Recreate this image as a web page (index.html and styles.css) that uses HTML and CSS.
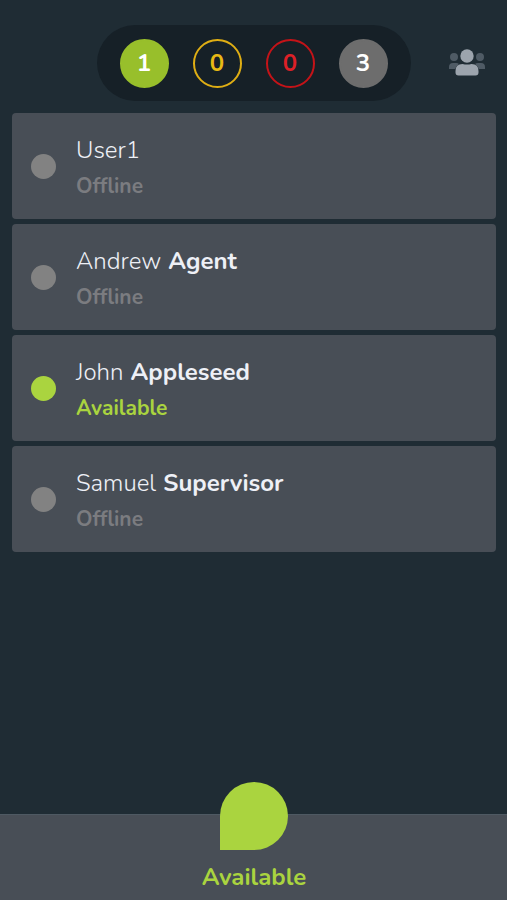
FILE: index.html
```html
<!DOCTYPE html>
<html lang="en">
<head>
<meta charset="utf-8">
<meta name="viewport" content="width=device-width, initial-scale=1">
<title>Team status</title>
<link rel="stylesheet" href="styles.css">
</head>
<body>
<header class="top">
  <div class="counts">
    <span class="count count-available">1</span>
    <span class="count count-away">0</span>
    <span class="count count-busy">0</span>
    <span class="count count-offline">3</span>
  </div>
  <button class="team" type="button" aria-label="Team">
    <svg viewBox="0 0 38 28" width="38" height="28" aria-hidden="true">
      <g fill="#4f5b65">
        <circle cx="6" cy="8" r="4"/>
        <circle cx="32" cy="8" r="4"/>
        <path d="M1 20v-2q0-4 4-4h3q2 0 3 1-3 2-4 5zM37 20v-2q0-4-4-4h-3q-2 0-3 1 3 2 4 5z"/>
      </g>
      <g fill="#9ca4ad">
        <circle cx="19" cy="7" r="6.700"/>
        <path d="M7.500 23.500v-1.500q0-7 7-7 4.500 1 9 0 7 0 7 7v1.500q0 3-3 3H10.500q-3 0-3-3z"/>
      </g>
    </svg>
  </button>
</header>
<main>
  <ul class="users">
    <li class="user">
      <span class="dot"></span>
      <div><p class="name">User1</p><p class="state">Offline</p></div>
    </li>
    <li class="user">
      <span class="dot"></span>
      <div><p class="name">Andrew <b>Agent</b></p><p class="state">Offline</p></div>
    </li>
    <li class="user available">
      <span class="dot"></span>
      <div><p class="name">John <b>Appleseed</b></p><p class="state">Available</p></div>
    </li>
    <li class="user">
      <span class="dot"></span>
      <div><p class="name">Samuel <b>Supervisor</b></p><p class="state">Offline</p></div>
    </li>
  </ul>
</main>
<footer class="bottom">
  <button class="my-status" type="button">
    <span class="drop"></span>
    <span>Available</span>
  </button>
</footer>
</body>
</html>
```
FILE: styles.css
```css
* {
  box-sizing: border-box;
}

body {
  display: flex;
  flex-direction: column;
  min-height: 100vh;
  margin: 0;
  background: #1f2c34;
  color: #eef0f6;
  font-family: Nunito, "Open Sans", sans-serif;
}

button {
  padding: 0;
  border: 0;
  background: none;
  color: inherit;
  font: inherit;
  cursor: pointer;
}

.top {
  display: grid;
  grid-template-columns: 1fr auto 1fr;
  align-items: center;
  padding: 25px 21px 12px;
}

.counts {
  display: flex;
  grid-column: 2;
  gap: 24px;
  padding: 14px 23px 13px;
  border-radius: 38px;
  background: #162027;
}

.count {
  display: flex;
  align-items: center;
  justify-content: center;
  width: 49px;
  height: 49px;
  padding-bottom: 1px;
  border: 2px solid;
  border-radius: 50%;
  font-size: 24px;
  font-weight: 700;
  line-height: 44px;
}

.count-available {
  border-color: #98bf2b;
  background: #98bf2b;
  color: #fff;
}

.count-away {
  border-color: #dfae14;
  color: #e8b914;
}

.count-busy {
  border-color: #c41318;
  color: #dd2027;
}

.count-offline {
  border-color: #6d6d6d;
  background: #6d6d6d;
  color: #fff;
}

.team {
  justify-self: end;
}

.team svg {
  display: block;
}

.users {
  display: flex;
  flex-direction: column;
  gap: 5px;
  margin: 0;
  padding: 0 11px 0 12px;
  list-style: none;
}

.user {
  display: flex;
  align-items: center;
  gap: 20px;
  min-height: 106px;
  padding: 0 19px;
  border-radius: 4px;
  background: #484e56;
}

.dot {
  flex: none;
  width: 25px;
  height: 25px;
  border-radius: 50%;
  background: #828282;
}

.name,
.state {
  margin: 0;
  line-height: 36px;
}

.name {
  padding-top: 3px;
  font-size: 24px;
  font-weight: 300;
}

.name b {
  margin-left: 1px;
  font-weight: 700;
}

.state {
  color: #7b7c80;
  font-size: 21px;
  font-weight: 700;
}

.available .dot {
  background: #aad43f;
}

.available .state {
  color: #aad43f;
}

.bottom {
  display: flex;
  justify-content: center;
  height: 86px;
  margin-top: auto;
  padding-left: 1px;
  border-top: 1px solid #4e5962;
  background: #484e56;
}

.my-status {
  display: flex;
  flex-direction: column;
  align-items: center;
  gap: 9px;
  margin-top: -33px;
  color: #aad43f;
  font-size: 24px;
  font-weight: 700;
  line-height: 36px;
}

.drop {
  width: 68px;
  height: 68px;
  border-radius: 50% 50% 50% 0;
  background: #aad43f;
}
```
